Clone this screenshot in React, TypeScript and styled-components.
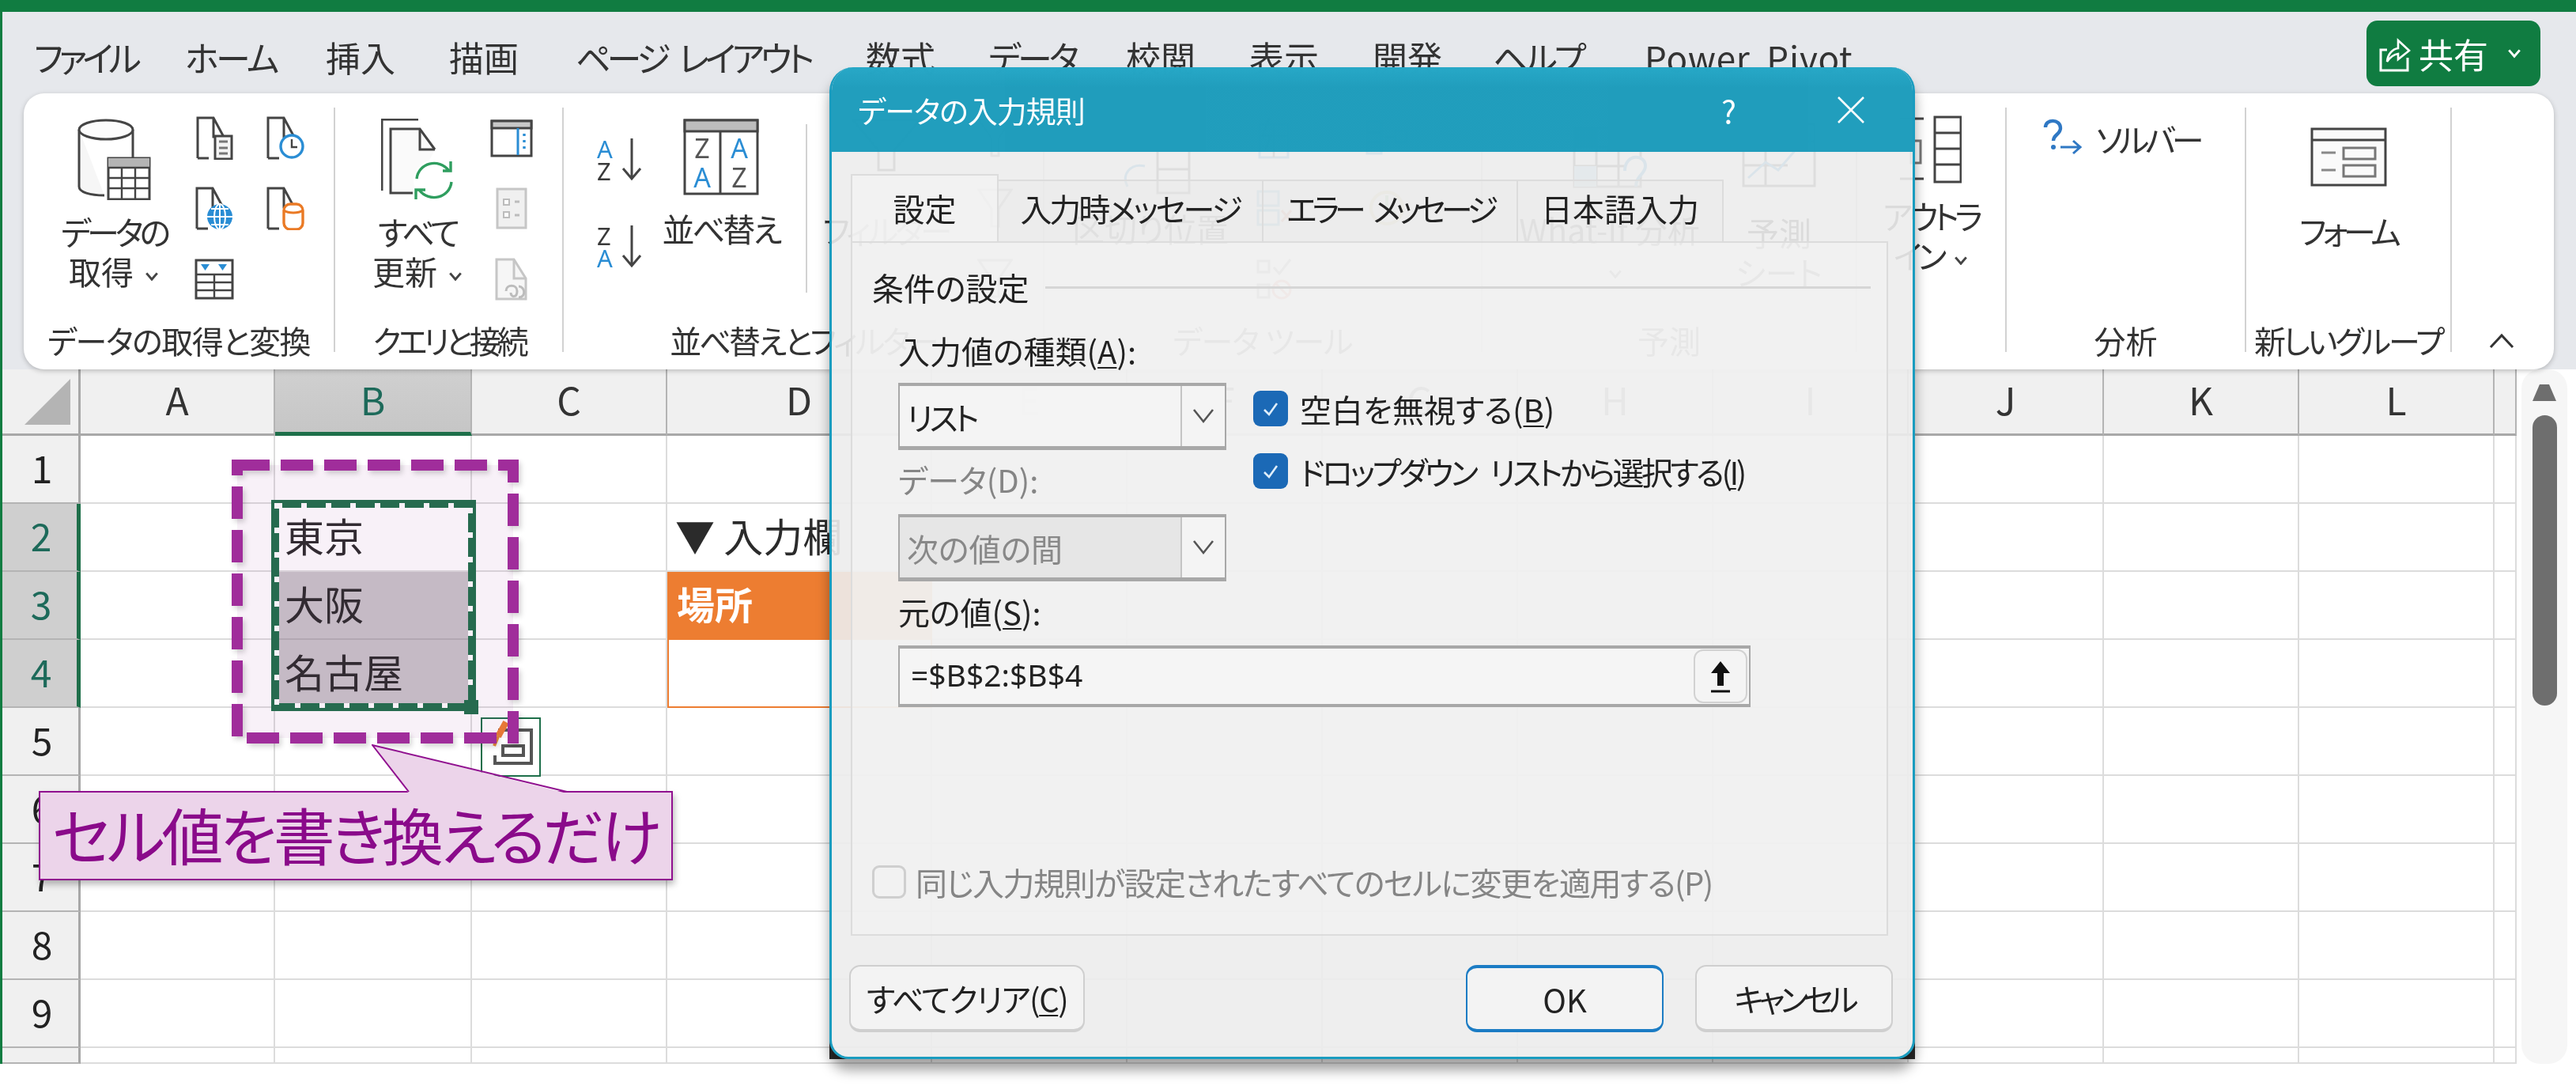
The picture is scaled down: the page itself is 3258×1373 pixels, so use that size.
import React from "react";
import styled, { createGlobalStyle } from "styled-components";

const FONT = `"Noto Sans CJK JP", "Noto Sans", sans-serif`;
const GREEN = "#107c41";
const CELLGREEN = "#1e6f4a";
const INK = "#444";
const BLUE = "#2a8dd4";

const Global = createGlobalStyle`
  html, body { margin: 0; padding: 0; background: #fff; width: 3258px; height: 1373px; overflow: hidden; }
  * { box-sizing: border-box; }
  #root { width: 3258px; height: 1373px; }
`;

const Page = styled.div`
  position: relative;
  width: 3258px;
  height: 1373px;
  overflow: hidden;
  font-family: ${FONT};
  font-feature-settings: "palt";
  color: #333;
  background: #fff;
  filter: blur(0.7px);
`;
const TopStrip = styled.div`height: 15px; background: ${GREEN};`;
const Frame = styled.div`border-left: 3px solid ${GREEN}; height: 1330px;`;
const TabBand = styled.div`
  height: 103px;
  background: #e6e8ec;
  display: flex;
  align-items: flex-start;
  padding-left: 40px;
`;
const MenuTab = styled.div<{ $w: number; $on?: boolean; $ls: number }>`
  width: ${(p) => p.$w}px;
  margin-top: 26px;
  height: 66px;
  font-size: 44px;
  line-height: 62px;
  letter-spacing: ${(p) => p.$ls}px;
  word-spacing: 10px;
  white-space: nowrap;
  position: relative;
  ${(p) => p.$on && `&::after{content:"";position:absolute;left:3px;width:110px;bottom:-1px;height:7px;background:${GREEN};}`}
`;
const ShareButton = styled.div`
  margin-left: auto;
  margin-top: 11px;
  margin-right: 45px;
  width: 220px;
  height: 83px;
  background: ${GREEN};
  border-radius: 14px;
  color: #fff;
  font-size: 44px;
  display: flex;
  align-items: center;
  padding-left: 16px;
  gap: 10px;
`;
const RibbonBand = styled.div`
  height: 349px;
  background: #e6e8ec;
  padding: 0 28px 0 27px;
`;
const Ribbon = styled.div`
  position: relative;
  z-index: 2;
  height: 349px;
  background: #fff;
  border-radius: 26px;
  box-shadow: 0 2px 6px rgba(0, 0, 0, 0.22);
  display: flex;
  padding: 18px 0 22px;
`;
const Group = styled.div<{ $w: number; $last?: boolean }>`
  flex: none;
  width: ${(p) => p.$w}px;
  display: flex;
  flex-direction: column;
  border-right: ${(p) => (p.$last ? "0" : "2px solid #d2d2d2")};
`;
const GroupBody = styled.div`flex: 1; display: flex; min-height: 0;`;
const GroupLabel = styled.div<{ $ls?: number }>`
  height: 50px;
  margin-bottom: -10px;
  text-align: center;
  font-size: 40px;
  line-height: 50px;
  letter-spacing: ${(p) => p.$ls ?? 0}px;
  white-space: nowrap;
`;
const Big = styled.div<{ $w: number; $ml?: number; $pt?: number }>`
  flex: none;
  width: ${(p) => p.$w}px;
  margin-left: ${(p) => p.$ml ?? 0}px;
  padding-top: ${(p) => p.$pt ?? 14}px;
  display: flex;
  flex-direction: column;
  align-items: center;
  svg { flex: none; }
`;
const BigText = styled.div<{ $mt: number }>`
  margin-top: ${(p) => p.$mt}px;
  font-size: 41px;
  line-height: 50px;
  text-align: center;
  white-space: nowrap;
`;
const Kana = styled.span<{ $ls?: number }>`letter-spacing: ${(p) => p.$ls ?? -5}px;`;
const IconGrid = styled.div<{ $cols: string; $ml?: number }>`
  flex: none;
  margin-left: ${(p) => p.$ml ?? 0}px;
  margin-top: 11px;
  display: grid;
  grid-template-columns: ${(p) => p.$cols};
  grid-auto-rows: 55px;
  column-gap: 30px;
  row-gap: 34px;
  place-items: center;
`;
const SortCol = styled.div`
  flex: none;
  margin: 39px 0 0 42px;
  display: flex;
  flex-direction: column;
  gap: 55px;
`;
const SortItem = styled.div`
  width: 57px;
  height: 55px;
  display: flex;
  justify-content: space-between;
`;
const SortLetters = styled.div`
  display: flex;
  flex-direction: column;
  font-family: "Noto Sans", sans-serif;
  font-size: 31px;
  line-height: 27.5px;
`;
const SortLetter = styled.span<{ $blue?: boolean }>`color: ${(p) => (p.$blue ? BLUE : "#3a3a3a")};`;
const InnerSep = styled.div`
  flex: none;
  width: 2px;
  height: 213px;
  margin: 21px 0 0 27px;
  background: #d2d2d2;
`;
const SolverRow = styled.div`
  display: flex;
  align-items: flex-start;
  gap: 18px;
  margin: 14px 0 0 46px;
  font-size: 41px;
  line-height: 50px;
  letter-spacing: -5px;
  white-space: nowrap;
`;
const CaretCell = styled.div`
  flex: 1;
  display: flex;
  align-items: flex-end;
  justify-content: center;
  padding-bottom: 4px;
`;

const MainRow = styled.div`display: flex; height: 878px;`;
const Sheet = styled.div`width: 3180px; flex: none;`;
const COLS = [246, 249, 247, 335, 247, 247, 247, 247, 247, 247, 247, 247, 28];
const SheetRow = styled.div<{ $h: number }>`
  display: grid;
  grid-template-columns: 99px ${COLS.map((c) => c + "px").join(" ")};
  height: ${(p) => p.$h}px;
`;
const Corner = styled.div`
  background: #f0f0f0;
  border-right: 3px solid #a8a8a8;
  border-bottom: 3px solid #a8a8a8;
  display: flex;
  align-items: center;
  justify-content: flex-end;
  padding-right: 10px;
`;
const ColHead = styled.div<{ $sel?: boolean }>`
  background: ${(p) => (p.$sel ? "linear-gradient(#d0d0d0,#c6c6c6)" : "#f0f0f0")};
  border-right: 2px solid #b4b4b4;
  border-bottom: ${(p) => (p.$sel ? `5px solid ${CELLGREEN}` : "3px solid #a8a8a8")};
  color: ${(p) => (p.$sel ? "#1d6a5a" : "#333")};
  font-size: 48px;
  line-height: 74px;
  text-align: center;
`;
const RowHead = styled.div<{ $sel?: boolean }>`
  background: ${(p) => (p.$sel ? "#cfcfcf" : "#f0f0f0")};
  border-right: ${(p) => (p.$sel ? `5px solid ${CELLGREEN}` : "3px solid #a8a8a8")};
  border-bottom: 2px solid #b4b4b4;
  color: ${(p) => (p.$sel ? "#1d6a5a" : "#222")};
  font-size: 48px;
  display: flex;
  align-items: center;
  justify-content: center;
  padding: 0 0 6px 4px;
`;
const Cell = styled.div<{ $fill?: string }>`
  background: ${(p) => p.$fill ?? "#fff"};
  border-right: 2px solid #dcdcdc;
  border-bottom: 2px solid ${(p) => (p.$fill ? "#b4b0b4" : "#dcdcdc")};
  font-size: 50px;
  display: flex;
  align-items: center;
  padding: 0 0 6px 12px;
  white-space: nowrap;
  color: #2b2b2b;
`;
const OrangeCell = styled(Cell)`
  background: #ed7d31;
  border-color: #ed7d31;
  color: #fff;
  font-weight: 700;
  font-size: 48px;
  padding-left: 12px;
`;
const InputCell = styled(Cell)`
  border: 2px solid #ed7d31;
  border-top: 0;
`;
const NoteCell = styled(Cell)`padding-left: 10px; overflow: visible;`;

const ScrollArea = styled.div`flex: 1; padding: 0 11px 0 6px; background: #fff;`;
const ScrollTrack = styled.div`
  height: 100%;
  background: #f6f6f6;
  border-radius: 24px;
  padding-top: 18px;
  display: flex;
  flex-direction: column;
  align-items: center;
  gap: 18px;
`;
const ScrollThumb = styled.div`
  width: 31px;
  height: 367px;
  border-radius: 16px;
  background: #6e6e6e;
`;

const MarchBox = styled.svg`position: absolute; left: 343px; top: 632px; z-index: 3;`;
const DashBox = styled.svg`
  position: absolute;
  left: 293px;
  top: 581px;
  z-index: 4;
  overflow: visible;
  rect + rect { filter: drop-shadow(3px 4px 3px rgba(0, 0, 0, 0.16)); }
`;
const PasteTag = styled.div`
  position: absolute;
  left: 608px;
  top: 907px;
  width: 76px;
  height: 75px;
  border: 2px solid ${CELLGREEN};
  background: #fff;
  z-index: 3;
`;
const CalloutBody = styled.div`
  position: absolute;
  left: 49px;
  top: 1000px;
  width: 802px;
  height: 113px;
  background: #ecd4ea;
  border: 2px solid #90108f;
  box-shadow: 2px 5px 8px rgba(0, 0, 0, 0.28);
  z-index: 5;
  color: #8a0a8a;
  font-size: 78px;
  line-height: 104px;
  letter-spacing: -4.4px;
  padding-left: 15px;
  white-space: nowrap;
`;
const CalloutTail = styled.svg`position: absolute; left: 470px; top: 941px; z-index: 6;`;

const DialogCorners = styled.div`
  position: absolute;
  left: 1049px;
  top: 1315px;
  width: 1373px;
  height: 24px;
  z-index: 9;
  background:
    radial-gradient(circle at 24px 0, transparent 23px, #2a2a2a 24px) left bottom / 24px 24px no-repeat,
    radial-gradient(circle at 0 0, transparent 23px, #2a2a2a 24px) right bottom / 24px 24px no-repeat;
`;
const Dialog = styled.div`
  position: absolute;
  left: 1049px;
  top: 85px;
  width: 1373px;
  height: 1254px;
  z-index: 10;
  border-radius: 30px 30px 24px 24px;
  border: 3px solid #1a9cbf;
  border-top: 0;
  box-shadow: 0 14px 16px rgba(0, 0, 0, 0.36);
  display: flex;
  flex-direction: column;
  background: rgba(236, 236, 236, 0.91);
  overflow: hidden;
`;
const TitleBar = styled.div`
  flex: none;
  height: 107px;
  margin: 0 -3px;
  background: linear-gradient(#21a6c6 0, #1a9bbb 24%, #1a9bbb 100%);
  opacity: 0.97;
  display: flex;
  align-items: center;
  padding: 0 63px 0 36px;
  color: #fff;
  font-size: 38px;
`;
const TitleText = styled.div`flex: 1; white-space: nowrap; letter-spacing: -1px;`;
const HelpMark = styled.div`margin-right: 127px; font-size: 40px;`;
const TabStrip = styled.div`
  flex: none;
  height: 113px;
  margin-left: 24px;
  display: flex;
  align-items: flex-end;
`;
const DlgTab = styled.div<{ $w: number; $on?: boolean; $ls?: number }>`
  width: ${(p) => p.$w}px;
  height: ${(p) => (p.$on ? 85 : 78)}px;
  background: ${(p) => (p.$on ? "rgba(244,244,244,.7)" : "rgba(232,232,232,.4)")};
  border: 2px solid #dcdcdc;
  border-bottom: 0;
  border-left-width: ${(p) => (p.$on ? 2 : 0)}px;
  text-align: center;
  font-size: 40px;
  letter-spacing: ${(p) => p.$ls ?? 0}px;
  word-spacing: 12px;
  line-height: ${(p) => (p.$on ? 82 : 68)}px;
  color: #222;
  white-space: nowrap;
`;
const Panel = styled.div`
  flex: none;
  height: 878px;
  margin: 0 31px 0 24px;
  background: rgba(244, 244, 244, 0.5);
  border: 2px solid #dcdcdc;
  padding: 31px 20px 0 25px;
  color: #222;
  font-size: 40px;
  line-height: 50px;
`;
const GroupHead = styled.div`display: flex; align-items: center; gap: 20px; white-space: nowrap;`;
const HeadRule = styled.div`flex: 1; height: 3px; background: #d6d6d6;`;
const Form = styled.div`margin: 30px 0 0 33px;`;
const Cols = styled.div`display: flex;`;
const LeftCol = styled.div`width: 415px; flex: none;`;
const RightCol = styled.div`
  margin-left: 34px;
  padding-top: 76px;
  display: flex;
  flex-direction: column;
  gap: 34px;
`;
const FieldLabel = styled.div<{ $mt?: number; $off?: boolean }>`
  margin-top: ${(p) => p.$mt ?? 0}px;
  white-space: nowrap;
  color: ${(p) => (p.$off ? "#858585" : "#222")};
  u { text-underline-offset: 4px; text-decoration-thickness: 2px; }
`;
const SelectBox = styled.div<{ $mt: number; $off?: boolean }>`
  margin-top: ${(p) => p.$mt}px;
  height: 85px;
  display: flex;
  border: 2px solid #a8a8a8;
  border-top-width: 4px;
  border-bottom-width: 5px;
  background: ${(p) => (p.$off ? "#e6e6e6" : "rgba(245,245,245,.85)")};
  color: ${(p) => (p.$off ? "#888" : "#222")};
`;
const SelectText = styled.div`flex: 1; padding-left: 9px; line-height: 78px; white-space: nowrap;`;
const SelectButton = styled.div`
  width: 56px;
  flex: none;
  border-left: 2px solid #c4c4c4;
  background: #f4f4f4;
  display: flex;
  align-items: center;
  justify-content: center;
`;
const CheckRow = styled.div<{ $ls?: number }>`
  display: flex;
  align-items: center;
  gap: 15px;
  height: 45px;
  white-space: nowrap;
  letter-spacing: ${(p) => p.$ls ?? 0}px;
  word-spacing: 12px;
  u { text-underline-offset: 4px; text-decoration-thickness: 2px; }
`;
const CheckMark = styled.div`
  width: 44px;
  height: 45px;
  flex: none;
  border-radius: 9px;
  background: #1b69b6;
  display: flex;
  align-items: center;
  justify-content: center;
`;
const SourceBox = styled.div`
  margin-top: 18px;
  width: 1078px;
  height: 78px;
  display: flex;
  justify-content: space-between;
  border: 2px solid #a8a8a8;
  border-top-width: 4px;
  border-bottom-width: 4px;
  background: rgba(246, 246, 246, 0.8);
  padding-left: 14px;
  line-height: 66px;
  font-size: 39px;
  font-family: "Noto Sans", sans-serif;
`;
const UploadButton = styled.div`
  width: 68px;
  height: 68px;
  margin: 1px 2px 0 0;
  border: 2px solid #d2d2d2;
  border-radius: 12px;
  background: #f4f4f4;
  display: flex;
  align-items: center;
  justify-content: center;
`;
const ApplyRow = styled.div`
  margin: 196px 0 0 -33px;
  display: flex;
  align-items: center;
  gap: 12px;
  color: #858585;
  white-space: nowrap;
  letter-spacing: -1.5px;
`;
const ApplyBox = styled.div`
  width: 43px;
  height: 42px;
  border: 3px solid #cfcfcf;
  border-radius: 9px;
  background: #f2f2f2;
  flex: none;
`;
const Footer = styled.div`
  flex: none;
  margin-top: 37px;
  padding: 0 25px 0 22px;
  display: flex;
  align-items: flex-start;
`;
const DlgButton = styled.div<{ $w: number; $on?: boolean; $mr?: number; $auto?: boolean; $ls?: number }>`
  width: ${(p) => p.$w}px;
  height: 85px;
  margin-right: ${(p) => p.$mr ?? 0}px;
  ${(p) => p.$auto && "margin-left:auto;"}
  border-radius: 14px;
  border: 2px solid ${(p) => (p.$on ? "#1b7cc4" : "#cfcfcf")};
  border-bottom-width: 4px;
  ${(p) => p.$on && "border-top-width:4px;"}
  background: #f3f3f3;
  display: flex;
  align-items: center;
  justify-content: center;
  color: #222;
  font-size: 40px;
  letter-spacing: ${(p) => p.$ls ?? 0}px;
  white-space: nowrap;
  u { text-underline-offset: 4px; text-decoration-thickness: 2px; }
`;

const S = { fill: "none", stroke: INK, strokeWidth: 3 };
const svgFont = `"Noto Sans", sans-serif`;

function Chev({ color = INK, size = 18 }: { color?: string; size?: number }) {
  return (
    <svg width={size} height={size * 0.7} viewBox="0 0 16 11" style={{ marginLeft: 14, verticalAlign: "middle" }}>
      <path d="M2 2l6 7 6-7" fill="none" stroke={color} strokeWidth="2.6" />
    </svg>
  );
}
function DocBase({ c = INK }: { c?: string }) {
  return <path d="M2 53V2h20l14 26M22 2v24h14M2 53h14" fill="none" stroke={c} strokeWidth="3" />;
}
const DbIcon = () => (
  <svg width="93" height="103" viewBox="0 0 93 103">
    <path d="M2 14v72c0 7 14 11 32 11" {...S} fill="#f6f6f6" />
    <path d="M70 14v36" {...S} />
    <ellipse cx="36" cy="14" rx="34" ry="12" {...S} fill="#fbfbfb" />
    <rect x="39" y="50" width="52" height="52" fill="#fff" stroke={INK} strokeWidth="3" />
    <rect x="39" y="50" width="52" height="12" fill="#b4b4b4" />
    <path d="M39 62h52M39 75h52M39 88h52M56 62v40M73 62v40" stroke={INK} strokeWidth="2.4" fill="none" />
  </svg>
);
const DocList = () => (
  <svg width="47" height="55" viewBox="0 0 47 55">
    <DocBase />
    <rect x="24" y="25" width="21" height="29" fill="#f4f4f4" stroke={INK} strokeWidth="3" />
    <path d="M29 32h11M29 40h11M29 47h11" stroke="#777" strokeWidth="3" />
  </svg>
);
const DocClock = () => (
  <svg width="48" height="55" viewBox="0 0 48 55">
    <DocBase />
    <circle cx="32" cy="38" r="14" fill="#fff" stroke={BLUE} strokeWidth="3.4" />
    <path d="M32 29v10h7" fill="none" stroke={INK} strokeWidth="2.4" />
  </svg>
);
const DocGlobe = () => (
  <svg width="48" height="55" viewBox="0 0 48 55">
    <DocBase />
    <circle cx="31" cy="38" r="16" fill={BLUE} />
    <path d="M15 38h32M31 22v32M20 28h22M20 48h22" stroke="#fff" strokeWidth="2" fill="none" />
    <ellipse cx="31" cy="38" rx="7" ry="16" fill="none" stroke="#fff" strokeWidth="2" />
  </svg>
);
const DocDb = () => (
  <svg width="48" height="55" viewBox="0 0 48 55">
    <DocBase />
    <rect x="22" y="22" width="24" height="32" rx="8" fill="#fff" stroke="#ea7a25" strokeWidth="3.4" />
    <path d="M22 30c6 4 18 4 24 0" fill="none" stroke="#ea7a25" strokeWidth="3" />
  </svg>
);
const TableFilter = () => (
  <svg width="50" height="52" viewBox="0 0 50 52">
    <rect x="2" y="2" width="46" height="48" fill="#fff" stroke={INK} strokeWidth="3" />
    <path d="M2 20h46M2 30h46M2 40h46M25 20v30" stroke={INK} strokeWidth="2.4" />
    <path d="M8 7h11l-5.5 8zM30 7h11l-5.5 8z" fill={BLUE} />
  </svg>
);
const Refresh = () => (
  <svg width="93" height="103" viewBox="0 0 93 103">
    <path d="M47 1H1v90" fill="none" stroke={INK} strokeWidth="3" />
    <path d="M40 94H12V13h37l19 26" fill="#fafafa" stroke={INK} strokeWidth="3" />
    <path d="M49 13v26h19" fill="none" stroke={INK} strokeWidth="3" />
    <circle cx="67" cy="78" r="26" fill="#fff" />
    <path d="M45 76c2-20 28-27 41-10M89 80c-2 20-28 27-41 10" fill="none" stroke="#2f9e5f" strokeWidth="3.4" />
    <path d="M78 66h10V54M56 90H44v12" fill="none" stroke="#2f9e5f" strokeWidth="3.4" />
  </svg>
);
const PaneIcon = () => (
  <svg width="54" height="48" viewBox="0 0 54 48">
    <rect x="2" y="2" width="50" height="44" fill="#fff" stroke={INK} strokeWidth="3" />
    <rect x="2" y="2" width="50" height="9" fill="#c8c8c8" stroke={INK} strokeWidth="3" />
    <path d="M35 11v34" stroke={BLUE} strokeWidth="3" />
    <path d="M43 18v3M43 26v3M43 34v3" stroke={BLUE} strokeWidth="3.4" />
  </svg>
);
const PropsOff = () => (
  <svg width="40" height="53" viewBox="0 0 40 53">
    <rect x="2" y="2" width="36" height="49" fill="#f0f0f0" stroke="#c6c6c6" strokeWidth="3" />
    <path d="M10 15h7v7h-7zM10 31h7v7h-7z" fill="#fff" stroke="#bcbcbc" strokeWidth="2" />
    <path d="M24 18h6M24 35h6" stroke="#bcbcbc" strokeWidth="3" />
  </svg>
);
const LinkOff = () => (
  <svg width="42" height="54" viewBox="0 0 42 54">
    <path d="M2 52V2h22l15 24v26z" fill="#f6f6f6" stroke="#c6c6c6" strokeWidth="3" />
    <path d="M24 2v24h15" fill="none" stroke="#c6c6c6" strokeWidth="3" />
    <path d="M14 42c0-9 14-9 14 0s-8 8-8 2M30 36c8 0 10 14 0 14" fill="none" stroke="#bcbcbc" strokeWidth="3" />
  </svg>
);
function SortPair({ top, bottom }: { top: string; bottom: string }) {
  return (
    <SortItem>
      <SortLetters>
        <SortLetter $blue={top === "A"}>{top}</SortLetter>
        <SortLetter $blue={bottom === "A"}>{bottom}</SortLetter>
      </SortLetters>
      <svg width="26" height="55" viewBox="0 0 26 55">
        <path d="M13 0v50M2 38l11 13 11-13" fill="none" stroke={INK} strokeWidth="3" />
      </svg>
    </SortItem>
  );
}
const SortBig = () => (
  <svg width="96" height="97" viewBox="0 0 96 97">
    <rect x="2" y="2" width="92" height="93" fill="#fff" stroke={INK} strokeWidth="3" />
    <rect x="2" y="2" width="92" height="14" fill="#bdbdbd" stroke={INK} strokeWidth="3" />
    <path d="M47 16v79" stroke={INK} strokeWidth="3" />
    <g fontFamily={svgFont} fontSize="34" textAnchor="middle">
      <text x="24" y="50" fill="#555">Z</text>
      <text x="24" y="87" fill={BLUE}>A</text>
      <text x="71" y="50" fill={BLUE}>A</text>
      <text x="71" y="87" fill="#555">Z</text>
    </g>
  </svg>
);
const Funnel = () => (
  <svg width="90" height="67" viewBox="0 0 90 67">
    <path d="M3 2h84L55 40v25H35V40z" fill="#fff" stroke={INK} strokeWidth="3" />
  </svg>
);
const SmallFunnel = ({ c = "#888" }: { c?: string }) => (
  <svg width="45" height="52" viewBox="0 0 45 52">
    <path d="M2 2h41L27 26v22H18V26z" fill="#fff" stroke={c} strokeWidth="3" />
  </svg>
);
const TextCols = () => (
  <svg width="107" height="97" viewBox="0 0 107 97">
    <path d="M0 28h50M0 40h50" stroke={INK} strokeWidth="3" />
    <path d="M46 60c-18-4-30 10-22 26" fill="none" stroke={BLUE} strokeWidth="3" />
    <rect x="62" y="2" width="40" height="92" fill="#fff" stroke={INK} strokeWidth="3" />
    <path d="M62 34h40M62 64h40" stroke={INK} strokeWidth="3" />
  </svg>
);
const FlashFill = () => (
  <svg width="53" height="52" viewBox="0 0 53 52">
    <rect x="8" y="8" width="36" height="42" fill="#fff" stroke={BLUE} strokeWidth="3" />
    <path d="M8 22h36M26 8v42" stroke={INK} strokeWidth="2.6" />
    <path d="M20 0l-8 22h10l-6 18" fill="none" stroke="#333" strokeWidth="3" />
  </svg>
);
const Dedup = () => (
  <svg width="53" height="55" viewBox="0 0 53 55">
    <rect x="6" y="6" width="26" height="18" fill="#dceefa" stroke={BLUE} strokeWidth="3" />
    <rect x="6" y="30" width="26" height="18" fill="#fff" stroke={BLUE} strokeWidth="3" />
    <path d="M36 30l12 14M48 30L36 44" stroke="#e05a3a" strokeWidth="3" />
  </svg>
);
const Validate = () => (
  <svg width="45" height="53" viewBox="0 0 45 53">
    <path d="M2 4h14v14H2zM2 34h14v16H2z" fill="none" stroke="#666" strokeWidth="3" />
    <path d="M22 12l7 8 14-18" fill="none" stroke="#666" strokeWidth="3" />
    <circle cx="32" cy="40" r="11" fill="none" stroke="#e05a3a" strokeWidth="3" />
    <path d="M24 32l16 16" stroke="#e05a3a" strokeWidth="3" />
  </svg>
);
const Consolidate = () => (
  <svg width="54" height="45" viewBox="0 0 54 45">
    <path d="M2 2h18v40H2z" fill="#fff" stroke={BLUE} strokeWidth="3" />
    <path d="M2 15h18M2 28h18" stroke={INK} strokeWidth="3" />
    <rect x="38" y="14" width="14" height="14" fill="#fff" stroke={BLUE} strokeWidth="3" />
    <path d="M24 21h12" stroke="#555" strokeWidth="3" />
  </svg>
);
const Relation = () => (
  <svg width="54" height="53" viewBox="0 0 54 53">
    <circle cx="27" cy="26" r="20" fill="#fff" stroke="#d9c46c" strokeWidth="4" />
    <path d="M27 10v16l12 8" fill="none" stroke="#7db87d" strokeWidth="4" />
  </svg>
);
const WhatIf = () => (
  <svg width="94" height="80" viewBox="0 0 94 80">
    <rect x="2" y="2" width="84" height="74" fill="#fff" stroke={INK} strokeWidth="3" />
    <rect x="2" y="2" width="28" height="24" fill="#555" />
    <path d="M30 2v74M58 2v74M2 26h84M2 50h84" stroke={INK} strokeWidth="3" />
    <rect x="2" y="50" width="28" height="26" fill="#8cc4ea" />
    <path d="M66 56c0-22 26-22 26-6 0 10-12 12-12 26" fill="#fff" stroke={BLUE} strokeWidth="4" />
  </svg>
);
const Forecast = () => (
  <svg width="94" height="82" viewBox="0 0 94 82">
    <rect x="2" y="2" width="90" height="78" fill="#fff" stroke={INK} strokeWidth="3" />
    <path d="M2 24h90M30 2v78M2 54h56" stroke={INK} strokeWidth="3" />
    <path d="M8 70l22-20 16 10 38-44M70 14h16v14" fill="none" stroke={BLUE} strokeWidth="3" />
  </svg>
);
const Outline = () => (
  <svg width="78" height="86" viewBox="0 0 78 86">
    <path d="M0 4h30M0 80h30" stroke={INK} strokeWidth="3" />
    <path d="M14 32h12v28H14z" fill="none" stroke="#777" strokeWidth="3" />
    <rect x="44" y="2" width="33" height="82" fill="#fff" stroke={INK} strokeWidth="3" />
    <path d="M44 22h33M44 42h33M44 62h33" stroke={INK} strokeWidth="3" />
  </svg>
);
const Solver = () => (
  <svg width="49" height="46" viewBox="0 0 49 46">
    <path d="M3 11c0-11 19-11 19 1 0 8-9 8-9 16" fill="none" stroke="#2f78c4" strokeWidth="4.4" />
    <circle cx="13" cy="36" r="3" fill="#2f78c4" />
    <path d="M22 36h24M38 28l9 8-9 8" fill="none" stroke="#2f78c4" strokeWidth="3" />
  </svg>
);
const FormIcon = () => (
  <svg width="97" height="75" viewBox="0 0 97 75">
    <rect x="2" y="2" width="93" height="71" fill="#fafafa" stroke={INK} strokeWidth="3" />
    <path d="M2 16h93" stroke={INK} strokeWidth="3" />
    <path d="M14 32h18M14 54h18" stroke="#888" strokeWidth="3" />
    <rect x="42" y="26" width="40" height="14" fill="none" stroke="#777" strokeWidth="3" />
    <rect x="42" y="48" width="40" height="14" fill="none" stroke="#777" strokeWidth="3" />
  </svg>
);
const ShareIcon = () => (
  <svg width="40" height="46" viewBox="0 0 40 46">
    <path d="M10 18H2v26h34V28" fill="none" stroke="#fff" strokeWidth="3" />
    <path d="M10 33c1-10 7-16 14-17V6l14 13-14 11v-7c-6 1-10 4-14 10z" fill="none" stroke="#fff" strokeWidth="2.6" />
  </svg>
);
const Caret = () => (
  <svg width="32" height="20" viewBox="0 0 32 20">
    <path d="M2 18L16 3l14 15" fill="none" stroke="#333" strokeWidth="3" />
  </svg>
);
const CornerTri = () => (
  <svg width="58" height="58" viewBox="0 0 58 58">
    <path d="M58 0v58H0z" fill="#b4b4b4" />
  </svg>
);
const ScrollUp = () => (
  <svg width="30" height="22" viewBox="0 0 30 22">
    <path d="M9 1h12l9 21H0z" fill="#6e6e6e" />
  </svg>
);
const Tick = () => (
  <svg width="22" height="20" viewBox="0 0 22 20">
    <path d="M3 11l6 6L19 3" fill="none" stroke="#dfeefa" strokeWidth="2.6" />
  </svg>
);
const DownV = () => (
  <svg width="28" height="20" viewBox="0 0 28 20">
    <path d="M2 2l12 15L26 2" fill="none" stroke="#555" strokeWidth="2.6" />
  </svg>
);
const UpArrow = () => (
  <svg width="30" height="44" viewBox="0 0 30 44">
    <path d="M15 3L3 18h8v16h8V18h8z" fill="#111" />
    <path d="M3 41h24" stroke="#111" strokeWidth="3" />
  </svg>
);
const CloseX = () => (
  <svg width="36" height="34" viewBox="0 0 36 34">
    <path d="M2 1l32 32M34 1L2 33" stroke="#fff" strokeWidth="2.6" />
  </svg>
);

const menu: { t: string; w: number; ls: number; on?: boolean }[] = [
  { t: "ファイル", w: 191, ls: -5.5 },
  { t: "ホーム", w: 178, ls: -3.3 },
  { t: "挿入", w: 156, ls: 0 },
  { t: "描画", w: 160, ls: 0 },
  { t: "ページ レイアウト", w: 367, ls: -5 },
  { t: "数式", w: 155, ls: 0 },
  { t: "データ", w: 174, ls: -4, on: true },
  { t: "校閲", w: 156, ls: 0 },
  { t: "表示", w: 156, ls: 0 },
  { t: "開発", w: 152, ls: 0 },
  { t: "ヘルプ", w: 192, ls: -4 },
  { t: "Power Pivot", w: 300, ls: 0.8 },
];
const letters = ["A", "B", "C", "D", "E", "F", "G", "H", "I", "J", "K", "L", ""];
const rows = [1, 2, 3, 4, 5, 6, 7, 8, 9];

function cellsFor(r: number) {
  return letters.map((l) => {
    const key = l + r;
    if (key === "B2") return <Cell key={key}>東京</Cell>;
    if (key === "B3") return <Cell key={key} $fill="#c9c4c9">大阪</Cell>;
    if (key === "B4") return <Cell key={key} $fill="#c9c4c9">名古屋</Cell>;
    if (key === "D2") return <NoteCell key={key}>▼ 入力欄</NoteCell>;
    if (key === "D3") return <OrangeCell key={key}>場所</OrangeCell>;
    if (key === "D4") return <InputCell key={key} />;
    return <Cell key={key} />;
  });
}

export default function App() {
  return (
    <Page>
      <Global />
      <TopStrip />
      <Frame>
        <TabBand>
          {menu.map((m) => (
            <MenuTab key={m.t} $w={m.w} $on={m.on} $ls={m.ls}>{m.t}</MenuTab>
          ))}
          <ShareButton>
            <ShareIcon />
            <span>共有</span>
            <Chev color="#fff" size={18} />
          </ShareButton>
        </TabBand>
        <RibbonBand>
          <Ribbon>
            <Group $w={394}>
              <GroupBody>
                <Big $w={190} $ml={19}>
                  <DbIcon />
                  <BigText $mt={14}><Kana>データの</Kana><br />取得<Chev /></BigText>
                </Big>
                <IconGrid $cols="60px 60px" $ml={2}>
                  <DocList /><DocClock />
                  <DocGlobe /><DocDb />
                  <TableFilter />
                </IconGrid>
              </GroupBody>
              <GroupLabel $ls={-1.5}>データの取得と変換</GroupLabel>
            </Group>
            <Group $w={289}>
              <GroupBody>
                <Big $w={184} $ml={12}>
                  <Refresh />
                  <BigText $mt={14}><Kana $ls={-4}>すべて</Kana><br />更新<Chev /></BigText>
                </Big>
                <IconGrid $cols="53px">
                  <PaneIcon />
                  <PropsOff />
                  <LinkOff />
                </IconGrid>
              </GroupBody>
              <GroupLabel $ls={-5}>クエリと接続</GroupLabel>
            </Group>
            <Group $w={608}>
              <GroupBody>
                <SortCol>
                  <SortPair top="A" bottom="Z" />
                  <SortPair top="Z" bottom="A" />
                </SortCol>
                <Big $w={160} $ml={20}>
                  <SortBig />
                  <BigText $mt={16}><Kana $ls={-3}>並べ替え</Kana></BigText>
                </Big>
                <InnerSep />
                <Big $w={143} $ml={28}>
                  <Funnel />
                  <BigText $mt={48}><Kana $ls={-4}>フィルター</Kana></BigText>
                </Big>
                <IconGrid $cols="45px" $ml={44}>
                  <SmallFunnel />
                  <SmallFunnel />
                  <SmallFunnel />
                </IconGrid>
              </GroupBody>
              <GroupLabel $ls={-3}>並べ替えとフィルター</GroupLabel>
            </Group>
            <Group $w={554}>
              <GroupBody>
                <Big $w={188} $ml={40}>
                  <TextCols />
                  <BigText $mt={16}>区切り位置</BigText>
                </Big>
                <IconGrid $cols="53px" $ml={36}>
                  <FlashFill />
                  <Dedup />
                  <Validate />
                </IconGrid>
                <IconGrid $cols="54px" $ml={89}>
                  <Consolidate />
                  <Relation />
                </IconGrid>
              </GroupBody>
              <GroupLabel $ls={-1}>データ ツール</GroupLabel>
            </Group>
            <Group $w={474}>
              <GroupBody>
                <Big $w={241} $ml={40} $pt={24}>
                  <WhatIf />
                  <BigText $mt={24}>What-If 分析<br /><Chev /></BigText>
                </Big>
                <Big $w={128} $ml={30} $pt={19}>
                  <Forecast />
                  <BigText $mt={31}>予測<br />シート</BigText>
                </Big>
              </GroupBody>
              <GroupLabel>予測</GroupLabel>
            </Group>
            <Group $w={189}>
              <GroupBody>
                <Big $w={126} $ml={30} $pt={10}>
                  <Outline />
                  <BigText $mt={15}><Kana>アウトラ</Kana><br /><Kana>イン</Kana><Chev /></BigText>
                </Big>
              </GroupBody>
            </Group>
            <Group $w={303}>
              <GroupBody>
                <SolverRow><Solver />ソルバー</SolverRow>
              </GroupBody>
              <GroupLabel>分析</GroupLabel>
            </Group>
            <Group $w={260}>
              <GroupBody>
                <Big $w={258} $pt={25}>
                  <FormIcon />
                  <BigText $mt={30}><Kana>フォーム</Kana></BigText>
                </Big>
              </GroupBody>
              <GroupLabel $ls={-3}>新しいグループ</GroupLabel>
            </Group>
            <Group $w={126} $last>
              <CaretCell><Caret /></CaretCell>
            </Group>
          </Ribbon>
        </RibbonBand>
        <MainRow>
          <Sheet>
            <SheetRow $h={84}>
              <Corner><CornerTri /></Corner>
              {letters.map((l, i) => (
                <ColHead key={i} $sel={l === "B"}>{l}</ColHead>
              ))}
            </SheetRow>
            {rows.map((r) => (
              <SheetRow key={r} $h={86}>
                <RowHead $sel={r >= 2 && r <= 4}>{r}</RowHead>
                {cellsFor(r)}
              </SheetRow>
            ))}
            <SheetRow $h={20}>
              <RowHead />
              {letters.map((_, i) => <Cell key={i} />)}
            </SheetRow>
          </Sheet>
          <ScrollArea>
            <ScrollTrack>
              <ScrollUp />
              <ScrollThumb />
            </ScrollTrack>
          </ScrollArea>
        </MainRow>
      </Frame>

      <DashBox width="363" height="359" viewBox="0 0 363 359">
        <rect x="7" y="7" width="349" height="345" fill="rgba(150,60,160,0.07)" />
        <rect x="7" y="7" width="349" height="345" fill="none" stroke="#a02d9b" strokeWidth="14" strokeDasharray="41 14" />
      </DashBox>
      <MarchBox width="262" height="272" viewBox="0 0 262 272">
        <rect x="5" y="5" width="249" height="257" fill="none" stroke={CELLGREEN} strokeWidth="10" />
        <rect x="7" y="7" width="245" height="253" fill="none" stroke="#fff" strokeWidth="6" strokeDasharray="7 24" />
        <rect x="244" y="253" width="18" height="18" fill={CELLGREEN} />
      </MarchBox>
      <PasteTag>
        <svg width="72" height="71" viewBox="0 0 72 71">
          <path d="M20 14h42v42H16V46" fill="none" stroke="#555" strokeWidth="4" />
          <path d="M26 34h26v12H26z" fill="none" stroke="#555" strokeWidth="4" />
          <path d="M30 4L20 22" stroke="#ed7d31" strokeWidth="8" />
          <path d="M21 20l-6 14" stroke="#ed8c3a" strokeWidth="4" />
        </svg>
      </PasteTag>
      <CalloutBody>セル値を書き換えるだけ</CalloutBody>
      <CalloutTail width="250" height="63" viewBox="0 0 250 63">
        <path d="M1 1L47 62H247L1 1z" fill="#ecd4ea" />
        <path d="M47 60L1 1L247 60" fill="none" stroke="#90108f" strokeWidth="2" />
      </CalloutTail>

      <DialogCorners />
      <Dialog>
        <TitleBar>
          <TitleText>データの入力規則</TitleText>
          <HelpMark>?</HelpMark>
          <CloseX />
        </TitleBar>
        <TabStrip>
          <DlgTab $w={187} $on>設定</DlgTab>
          <DlgTab $w={335} $ls={-3}>入力時メッセージ</DlgTab>
          <DlgTab $w={322} $ls={-6}>エラー メッセージ</DlgTab>
          <DlgTab $w={260}>日本語入力</DlgTab>
        </TabStrip>
        <Panel>
          <GroupHead>条件の設定<HeadRule /></GroupHead>
          <Form>
            <Cols>
              <LeftCol>
                <FieldLabel>入力値の種類(<u>A</u>):</FieldLabel>
                <SelectBox $mt={16}>
                  <SelectText><Kana $ls={-4}>リスト</Kana></SelectText>
                  <SelectButton><DownV /></SelectButton>
                </SelectBox>
                <FieldLabel $mt={12} $off>データ(D):</FieldLabel>
                <SelectBox $mt={19} $off>
                  <SelectText>次の値の間</SelectText>
                  <SelectButton><DownV /></SelectButton>
                </SelectBox>
              </LeftCol>
              <RightCol>
                <CheckRow><CheckMark><Tick /></CheckMark><span>空白を無視する(<u>B</u>)</span></CheckRow>
                <CheckRow $ls={-3.5}><CheckMark><Tick /></CheckMark><span>ドロップダウン リストから選択する(<u>I</u>)</span></CheckRow>
              </RightCol>
            </Cols>
            <FieldLabel $mt={13}>元の値(<u>S</u>):</FieldLabel>
            <SourceBox>
              <span>=$B$2:$B$4</span>
              <UploadButton><UpArrow /></UploadButton>
            </SourceBox>
            <ApplyRow>
              <ApplyBox />
              同じ入力規則が設定されたすべてのセルに変更を適用する(P)
            </ApplyRow>
          </Form>
        </Panel>
        <Footer>
          <DlgButton $w={298} $ls={-1.5}><span>すべてクリア(<u>C</u>)</span></DlgButton>
          <DlgButton $w={250} $on $auto $mr={40}>OK</DlgButton>
          <DlgButton $w={250} $ls={-6}>キャンセル</DlgButton>
        </Footer>
      </Dialog>
    </Page>
  );
}
